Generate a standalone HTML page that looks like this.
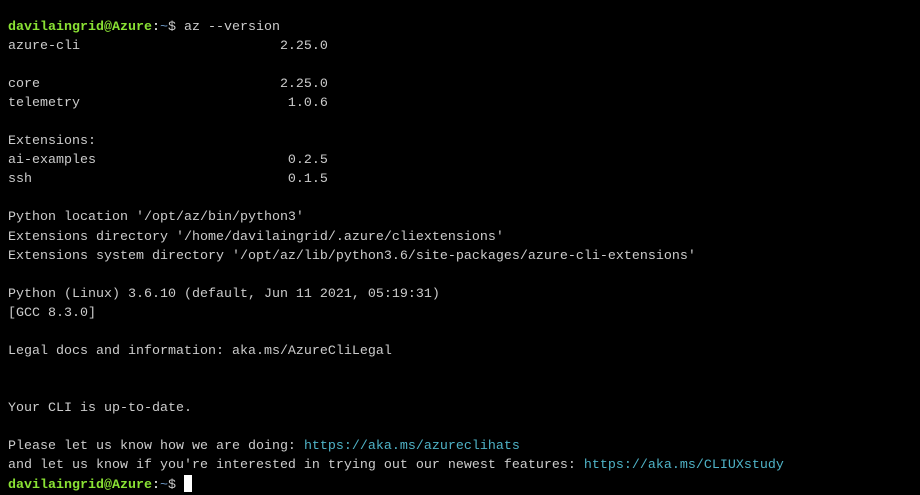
<html><head><style>
body{margin:0;background:#000;width:920px;height:495px;overflow:hidden}
pre{margin:0;padding:18px 0 0 8px;font-family:"Liberation Mono",monospace;font-size:13.33px;line-height:19.04px;color:#cccccc}
.g{color:#8ae234;font-weight:bold}.b{color:#729fcf}.w{color:#fff}.c{color:#4fb3c7}
.cur{display:inline-block;width:8px;height:17px;background:#fff;vertical-align:-4px}
</style></head><body><pre><span class="g">davilaingrid@Azure</span><span class="w">:</span><span class="b">~</span>$ az --version
azure-cli                         2.25.0

core                              2.25.0
telemetry                          1.0.6

Extensions:
ai-examples                        0.2.5
ssh                                0.1.5

Python location '/opt/az/bin/python3'
Extensions directory '/home/davilaingrid/.azure/cliextensions'
Extensions system directory '/opt/az/lib/python3.6/site-packages/azure-cli-extensions'

Python (Linux) 3.6.10 (default, Jun 11 2021, 05:19:31)
[GCC 8.3.0]

Legal docs and information: aka.ms/AzureCliLegal


Your CLI is up-to-date.

Please let us know how we are doing: <span class="c">https://aka.ms/azureclihats</span>
and let us know if you're interested in trying out our newest features: <span class="c">https://aka.ms/CLIUXstudy</span>
<span class="g">davilaingrid@Azure</span><span class="w">:</span><span class="b">~</span>$ <span class="cur"></span></pre></body></html>
